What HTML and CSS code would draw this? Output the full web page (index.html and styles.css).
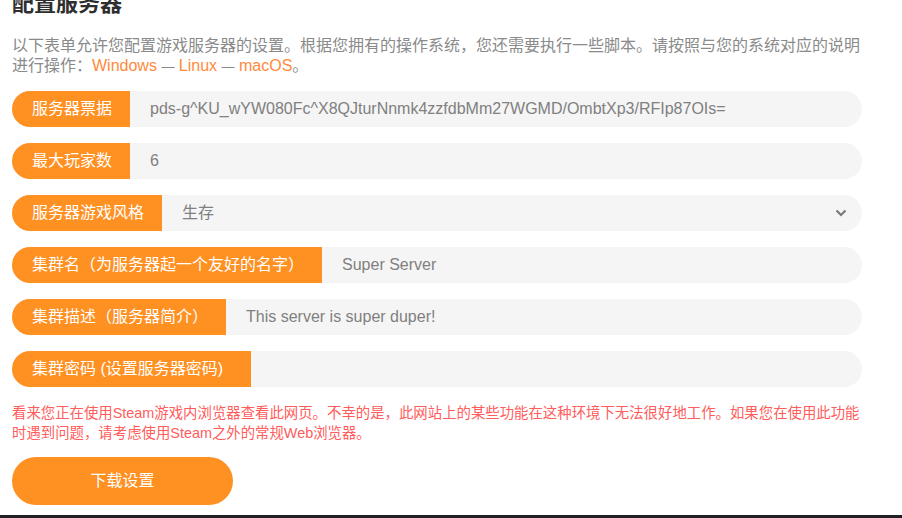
FILE: index.html
```html
<!DOCTYPE html>
<html lang="zh-CN">
<head>
<meta charset="utf-8">
<title>配置服务器</title>
<link rel="stylesheet" href="styles.css">
</head>
<body>
<div class="page">
  <h2 class="title">配置服务器</h2>
  <p class="desc">以下表单允许您配置游戏服务器的设置。根据您拥有的操作系统，您还需要执行一些脚本。请按照与您的系统对应的说明进行操作：<a class="link" href="#">Windows</a> <span class="dash">—</span> <a class="link" href="#">Linux</a> <span class="dash">—</span> <a class="link" href="#">macOS</a>。</p>
  <div class="form">
    <div class="row">
      <div class="label">服务器票据</div>
      <div class="field">pds-g^KU_wYW080Fc^X8QJturNnmk4zzfdbMm27WGMD/OmbtXp3/RFIp87OIs=</div>
    </div>
    <div class="row">
      <div class="label">最大玩家数</div>
      <div class="field">6</div>
    </div>
    <div class="row">
      <div class="label">服务器游戏风格</div>
      <div class="field select"><span>生存</span>
        <svg class="chev" width="12" height="8" viewBox="0 0 12 8"><path d="M1.5 1.5 L6 6 L10.5 1.5" fill="none" stroke="#7a7a7a" stroke-width="2.2"/></svg>
      </div>
    </div>
    <div class="row">
      <div class="label">集群名（为服务器起一个友好的名字）</div>
      <div class="field">Super Server</div>
    </div>
    <div class="row">
      <div class="label">集群描述（服务器简介）</div>
      <div class="field">This server is super duper!</div>
    </div>
    <div class="row">
      <div class="label label-wide">集群密码 (设置服务器密码)</div>
      <div class="field"></div>
    </div>
  </div>
  <p class="warn">看来您正在使用Steam游戏内浏览器查看此网页。不幸的是，此网站上的某些功能在这种环境下无法很好地工作。如果您在使用此功能时遇到问题，请考虑使用Steam之外的常规Web浏览器。</p>
  <button class="btn">下载设置</button>
</div>
<div class="bottombar"></div>
</body>
</html>
```
FILE: styles.css
```css
html, body {
  margin: 0;
  padding: 0;
  height: 518px;
  overflow: hidden;
  background: #fff;
}
body {
  font-family: "Liberation Sans", "Noto Sans CJK SC", sans-serif;
  display: flex;
  flex-direction: column;
}
.page {
  width: 850px;
  margin-left: 12px;
  flex: 1;
}
.title {
  margin: -10px 0 0 0;
  font-size: 22px;
  line-height: 28px;
  font-weight: 700;
  color: #2e2e2e;
}
.desc {
  margin: 18px 0 0 0;
  font-size: 16px;
  line-height: 20px;
  color: #8a8a8a;
}
.link {
  color: #ff8a3a;
  text-decoration: none;
}
.dash {
  font-size: 13px;
  line-height: 1;
}
.form {
  margin-top: 15px;
  display: flex;
  flex-direction: column;
  gap: 16px;
}
.row {
  display: flex;
  height: 36px;
}
.label {
  flex: none;
  background: #ff9022;
  color: #fff;
  font-size: 16px;
  line-height: 36px;
  padding: 0 18px 0 20px;
  border-radius: 18px 0 0 18px;
  white-space: nowrap;
}
.label-wide {
  padding-right: 28px;
}
.field {
  flex: 1;
  background: #f5f5f5;
  border-radius: 0 18px 18px 0;
  color: #808080;
  font-size: 16px;
  line-height: 36px;
  padding: 0 20px;
  white-space: nowrap;
  overflow: hidden;
}
.select {
  display: flex;
  align-items: center;
  justify-content: space-between;
  padding-right: 15px;
}
.warn {
  margin: 16px 0 0 0;
  font-size: 14.4px;
  line-height: 20px;
  color: #ff5c5c;
}
.btn {
  margin-top: 14px;
  width: 221px;
  height: 48px;
  border: none;
  border-radius: 24px;
  background: #ff9022;
  color: #fff;
  font-family: "Liberation Sans", "Noto Sans CJK SC", sans-serif;
  font-size: 16px;
  line-height: 20px;
  padding: 0;
  cursor: pointer;
}
.bottombar {
  height: 3px;
  background: #202124;
  flex: none;
}
```
